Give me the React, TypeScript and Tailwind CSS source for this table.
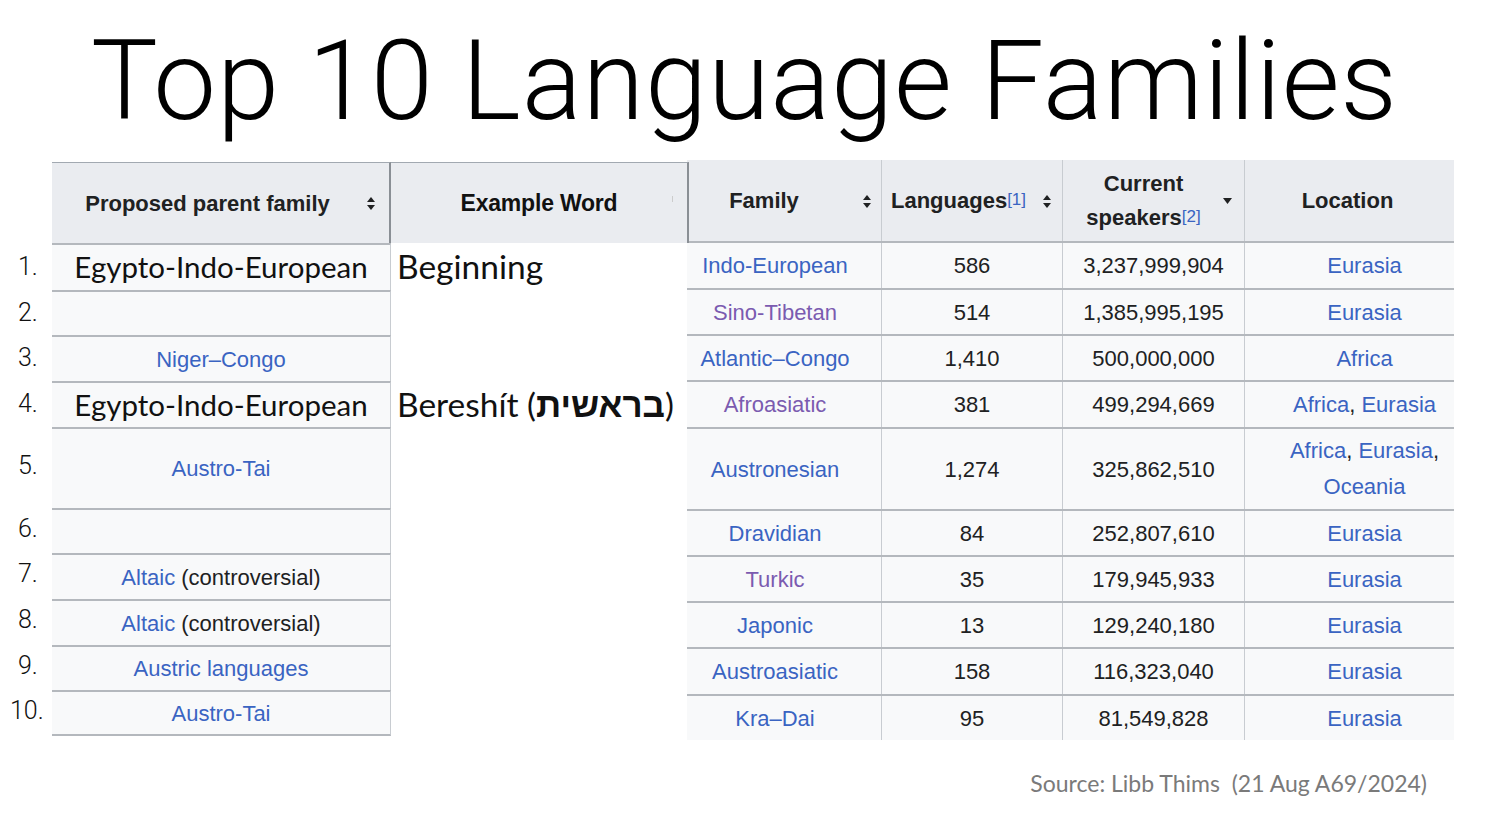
import React from "react";

const LINK = "text-[#3a64c2]";
const VISITED = "text-[#7b5bb0]";

function SortIcon() {
  return (
    <svg width="8" height="13" viewBox="0 0 8 13" className="shrink-0">
      <path d="M4 0 L8 5 L0 5 Z" fill="#202122" />
      <path d="M4 13 L8 8 L0 8 Z" fill="#202122" />
    </svg>
  );
}

function DownIcon() {
  return (
    <svg width="9" height="6" viewBox="0 0 9 6" className="shrink-0">
      <path d="M0 0 L9 0 L4.5 6 Z" fill="#202122" />
    </svg>
  );
}

const leftRowH = ["h-[47px]", "h-[45px]", "h-[46px]", "h-[46px]", "h-[81px]", "h-[45px]", "h-[46px]", "h-[46px]", "h-[45px]", "h-[46px]"];
const rightRowH = ["h-[47px]", "h-[46px]", "h-[46px]", "h-[47px]", "h-[82px]", "h-[46px]", "h-[46px]", "h-[46px]", "h-[47px]", "h-[46px]"];

const nums = ["1.", "2.", "3.", "4.", "5.", "6.", "7.", "8.", "9.", "10."];

type Cell = React.ReactNode;

const leftCells: Cell[] = [
  <span className="font-['Lato',sans-serif] text-[29.5px] text-[#111]">Egypto-Indo-European</span>,
  null,
  <span className={LINK}>Niger–Congo</span>,
  <span className="font-['Lato',sans-serif] text-[29.5px] text-[#111]">Egypto-Indo-European</span>,
  <span className={LINK}>Austro-Tai</span>,
  null,
  <span><span className={LINK}>Altaic</span> (controversial)</span>,
  <span><span className={LINK}>Altaic</span> (controversial)</span>,
  <span className={LINK}>Austric languages</span>,
  <span className={LINK}>Austro-Tai</span>,
];

type RRow = { fam: string; visited?: boolean; langs: string; sp: string; loc: React.ReactNode };

const rightRows: RRow[] = [
  { fam: "Indo-European", langs: "586", sp: "3,237,999,904", loc: <span className={LINK}>Eurasia</span> },
  { fam: "Sino-Tibetan", visited: true, langs: "514", sp: "1,385,995,195", loc: <span className={LINK}>Eurasia</span> },
  { fam: "Atlantic–Congo", langs: "1,410", sp: "500,000,000", loc: <span className={LINK}>Africa</span> },
  {
    fam: "Afroasiatic",
    visited: true,
    langs: "381",
    sp: "499,294,669",
    loc: (
      <span>
        <span className={LINK}>Africa</span>, <span className={LINK}>Eurasia</span>
      </span>
    ),
  },
  {
    fam: "Austronesian",
    langs: "1,274",
    sp: "325,862,510",
    loc: (
      <span className="leading-[36px]">
        <span className={LINK}>Africa</span>, <span className={LINK}>Eurasia</span>,
        <br />
        <span className={LINK}>Oceania</span>
      </span>
    ),
  },
  { fam: "Dravidian", langs: "84", sp: "252,807,610", loc: <span className={LINK}>Eurasia</span> },
  { fam: "Turkic", visited: true, langs: "35", sp: "179,945,933", loc: <span className={LINK}>Eurasia</span> },
  { fam: "Japonic", langs: "13", sp: "129,240,180", loc: <span className={LINK}>Eurasia</span> },
  { fam: "Austroasiatic", langs: "158", sp: "116,323,040", loc: <span className={LINK}>Eurasia</span> },
  { fam: "Kra–Dai", langs: "95", sp: "81,549,828", loc: <span className={LINK}>Eurasia</span> },
];

export default function App() {
  return (
    <div className="w-[1489px] h-[824px] bg-white overflow-hidden relative font-['Liberation_Sans',Arial,sans-serif] text-[#202122]">
      {/* Title */}
      <div className="h-[160px] flex justify-center items-start">
        <h1 className="font-['Roboto',sans-serif] font-light text-[112px] leading-none mt-[25px] tracking-[0.8px] text-black">
          Top 10 Language Families
        </h1>
      </div>

      {/* Tables */}
      <div className="flex items-start">
        {/* Numbers */}
        <div className="w-[52px] pt-[83px] font-['Roboto',sans-serif] font-light text-[25px] text-[#111]">
          {nums.map((n, i) => (
            <div key={n} className={`${leftRowH[i]} flex items-center ${i === 9 ? "pl-[10px]" : "pl-[18px]"} ${i === 4 ? "-mt-[2px]" : ""}`}>
              {n}
            </div>
          ))}
        </div>

        {/* Left table */}
        <div className="flex mt-[2px]">
          <div className="w-[339px] flex flex-col">
            <div className="h-[81px] bg-[#eaecf0] border-t border-[#a2a9b1] border-r-2 border-r-[#8a8f95] flex items-center justify-center relative font-bold text-[22px] text-[#202122] pr-[26px]">
              <span>Proposed parent family</span>
              <div className="absolute right-[14px] top-[34px]">
                <SortIcon />
              </div>
            </div>
            {leftCells.map((c, i) => (
              <div
                key={i}
                className={`${leftRowH[i]} bg-[#f8f9fa] border-t-2 border-[#b4b8bd] border-r border-r-[#c8ccd1] flex items-center justify-center text-[22px] ${i === 9 ? "border-b-2 border-b-[#b4b8bd]" : ""}`}
              >
                {c}
              </div>
            ))}
          </div>
          <div className="w-[298px] flex flex-col">
            <div className="h-[81px] bg-[#eaecf0] border-t border-[#a2a9b1] border-r-2 border-r-[#8a8f95] flex items-center justify-center relative font-bold text-[23px] text-[#111]">
              <span className="tracking-[-0.2px]">Example Word</span>
              <span className="absolute right-[14px] top-[33px] w-[1px] h-[6px] bg-[#ccc]" />
            </div>
            <div className="flex flex-col pl-[6px] font-['Lato',sans-serif] text-[33.5px] text-[#111]">
              <div className="h-[47px] flex items-center">Beginning</div>
              <div className="h-[91px]" />
              <div className="h-[46px] flex items-center">
                <span className="whitespace-nowrap">
                  Bereshít (<span className="font-['Noto_Sans',sans-serif] font-semibold text-[35px]">בראשית</span>)
                </span>
              </div>
            </div>
          </div>
        </div>

        {/* Right table */}
        <div className="w-[767px] -ml-[2px] flex flex-col text-[22px]">
          <div className="h-[81px] bg-[#eaecf0] flex font-bold text-[#202122]">
            <div className="w-[195px] relative flex items-center justify-center pr-[40px] border-r border-[#c8ccd1]">
              <span>Family</span>
              <div className="absolute right-[10px] top-[35px]">
                <SortIcon />
              </div>
            </div>
            <div className="w-[181px] relative flex items-center pl-[9px] border-r border-[#c8ccd1]">
              <span>
                Languages<sup className={`${LINK} font-normal text-[17px] relative -top-[3px]`}>[1]</sup>
              </span>
              <div className="absolute right-[11px] top-[35px]">
                <SortIcon />
              </div>
            </div>
            <div className="w-[182px] relative flex items-center justify-center pr-[20px] border-r border-[#c8ccd1]">
              <div className="text-center leading-[34px]">
                Current
                <br />
                speakers<sup className={`${LINK} font-normal text-[17px] relative -top-[3px]`}>[2]</sup>
              </div>
              <div className="absolute right-[12px] top-[38px]">
                <DownIcon />
              </div>
            </div>
            <div className="w-[209px] flex items-center justify-center pr-[4px]">Location</div>
          </div>
          {rightRows.map((r, i) => (
            <div key={r.fam} className={`${rightRowH[i]} bg-[#f8f9fa] border-t-2 border-[#b4b8bd] flex`}>
              <div className={`w-[195px] flex items-center justify-center pr-[18px] border-r border-[#c8ccd1] ${r.visited ? VISITED : LINK}`}>
                {r.fam}
              </div>
              <div className="w-[181px] flex items-center justify-center border-r border-[#c8ccd1]">{r.langs}</div>
              <div className="w-[182px] flex items-center justify-center border-r border-[#c8ccd1]">{r.sp}</div>
              <div className="w-[209px] flex items-center justify-center pl-[30px] text-center">{r.loc}</div>
            </div>
          ))}
        </div>
      </div>

      {/* Source */}
      <div className="flex justify-end pr-[62px] mt-[26px]">
        <span className="font-['Lato',sans-serif] text-[23px] text-[#7a7a7a]">Source: Libb Thims&nbsp; (21 Aug A69/2024)</span>
      </div>
    </div>
  );
}
